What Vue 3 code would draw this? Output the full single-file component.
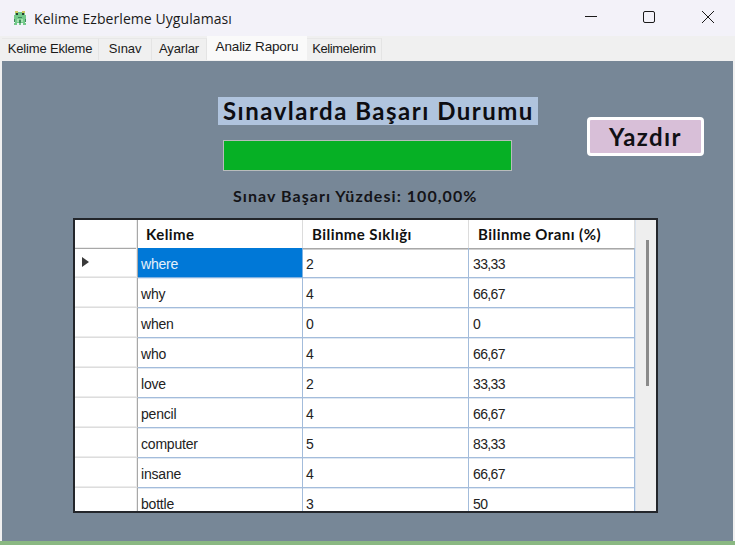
<script setup>
const tabs = [
  { name: 'Kelime Ekleme', w: 97 },
  { name: 'Sınav', w: 53 },
  { name: 'Ayarlar', w: 55 },
  { name: 'Analiz Raporu', w: 100, active: true },
  { name: 'Kelimelerim', w: 75 },
]
const rows = [
  ['where', '2', '33,33'],
  ['why', '4', '66,67'],
  ['when', '0', '0'],
  ['who', '4', '66,67'],
  ['love', '2', '33,33'],
  ['pencil', '4', '66,67'],
  ['computer', '5', '83,33'],
  ['insane', '4', '66,67'],
  ['bottle', '3', '50'],
]
</script>

<template>
  <div class="window">
    <header class="titlebar">
      <svg class="appicon" width="16" height="16" viewBox="0 0 16 16" shape-rendering="crispEdges">
        <path d="M3 1h3v1h4V1h3v4h1v5h-1v3h1v2h-3v-2H9v2H7v-2H5v2H2v-2h1v-3H2V5h1z" fill="#74c98a"/>
        <path d="M3 1h3v2H3zM10 1h3v2h-3z" fill="#cfc860"/>
        <path d="M4 3h2v2H4zM10 3h2v2h-2z" fill="#26402e"/>
        <path d="M6 7h4v1H6zM2 9h1v3H2zM13 9h1v3h-1zM7 10h2v3H7z" fill="#3d8a5a"/>
        <path d="M5 9h2v3H5zM9 9h2v3H9z" fill="#a6e2b0"/>
      </svg>
      <span class="apptitle">Kelime Ezberleme Uygulaması</span>
      <div class="winbtns">
        <svg width="12" height="12" viewBox="0 0 12 12"><path d="M0 5.5h12" stroke="#1a1a1a" stroke-width="1" fill="none"/></svg>
        <svg class="maxbtn" width="12" height="12" viewBox="0 0 12 12"><rect x="0.5" y="0.5" width="11" height="11" rx="1.5" stroke="#1a1a1a" stroke-width="1" fill="none"/></svg>
        <svg width="12" height="12" viewBox="0 0 12 12"><path d="M0 0l12 12M12 0L0 12" stroke="#1a1a1a" stroke-width="1" fill="none"/></svg>
      </div>
    </header>

    <nav class="tabs">
      <div
        v-for="t in tabs"
        :key="t.name"
        class="tab"
        :class="{ active: t.active }"
        :style="{ width: t.w + 'px' }"
      >{{ t.name }}</div>
    </nav>

    <main class="panel">
      <section class="top">
        <div class="summary">
          <h1 class="heading">Sınavlarda Başarı Durumu</h1>
          <div class="progress"></div>
          <p class="score">Sınav Başarı Yüzdesi: 100,00%</p>
        </div>
        <button class="print">Yazdır</button>
      </section>

      <section class="table">
        <div class="content">
          <div class="row head">
            <div class="rh"></div>
            <div class="c first">Kelime</div>
            <div class="c">Bilinme Sıklığı</div>
            <div class="c">Bilinme Oranı (%)</div>
          </div>
          <div v-for="(r, i) in rows" :key="r[0]" class="row">
            <div class="rh"><span v-if="i === 0" class="arrow"></span></div>
            <div class="c" :class="{ sel: i === 0 }">{{ r[0] }}</div>
            <div class="c num">{{ r[1] }}</div>
            <div class="c num last">{{ r[2] }}</div>
          </div>
        </div>
        <div class="scroll"><div class="thumb"></div></div>
      </section>
    </main>
    <div class="status"></div>
  </div>
</template>

<style>
html, body { margin: 0; overflow: hidden; }
</style>

<style scoped>
.window {
  width: 735px;
  height: 545px;
  display: flex;
  flex-direction: column;
  background: #f0f0f0;
  overflow: hidden;
  font-family: "Liberation Sans", sans-serif;
}
.titlebar {
  height: 36px;
  flex: none;
  background: #f3f2f9;
  display: flex;
  align-items: center;
  padding-left: 12px;
}
.appicon { margin-right: 6px; }
.apptitle {
  font-family: "Open Sans", sans-serif;
  font-size: 14px;
  letter-spacing: 0.07px;
  color: #1a1a1a;
}
.winbtns {
  margin-left: auto;
  margin-bottom: 2px;
  display: flex;
  gap: 46px;
  padding-right: 21px;
}
.maxbtn { margin-right: 1px; }
.tabs {
  height: 25px;
  flex: none;
  display: flex;
  align-items: flex-start;
  padding-left: 2px;
  box-sizing: border-box;
}
.tab {
  height: 22px;
  margin-top: 2px;
  box-sizing: border-box;
  font-size: 13px;
  letter-spacing: -0.15px;
  color: #1a1a1a;
  text-align: center;
  line-height: 20px;
  white-space: nowrap;
  background: #f0f0f0;
  border-right: 1px solid #e4e4e4;
  border-top: 1px solid #e8e8e8;
}
.tab:last-child { letter-spacing: -0.4px; }
.tab.active {
  background: #fafafa;
  height: 24px;
  margin-top: 0;
  font-size: 13.5px;
  line-height: 22px;
  border: none;
}
.panel {
  flex: 1;
  margin: 0 2px;
  background: #778797;
  min-height: 0;
  padding: 36px 0 0 71px;
  box-sizing: border-box;
}
.top {
  display: flex;
  height: 121px;
}
.summary {
  width: 320px;
  margin-left: 145px;
  display: flex;
  flex-direction: column;
  align-items: flex-start;
}
.heading {
  margin: 0;
  width: 320px;
  box-sizing: border-box;
  font-family: "Lato", sans-serif;
  font-size: 24px;
  line-height: 28px;
  font-weight: 700;
  letter-spacing: 1.5px;
  white-space: nowrap;
  color: #0d0d12;
  background: #b0c4de;
  padding: 0 5px;
}
.progress {
  width: 289px;
  height: 31px;
  margin: 15px 0 0 5px;
  flex: none;
  border: 1px solid #b8bcbc;
  box-sizing: border-box;
  background: #06b025;
}
.score {
  margin: 15px 0 0 15px;
  font-family: "Lato", sans-serif;
  font-size: 16px;
  line-height: 19px;
  font-weight: 700;
  letter-spacing: 1.05px;
  white-space: nowrap;
  color: #141418;
}
.print {
  width: 117px;
  height: 39px;
  margin: 20px 0 0 49px;
  background: #d8bfd8;
  border: 3px solid #fff;
  border-radius: 4px;
  font-family: "Lato", sans-serif;
  font-size: 24px;
  font-weight: 700;
  letter-spacing: 1.4px;
  color: #101014;
  padding: 0;
}
.table {
  width: 585px;
  height: 295px;
  box-sizing: border-box;
  border: 2px solid #23262b;
  display: flex;
  overflow: hidden;
  background: #fff;
}
.content { width: 560px; flex: none; overflow: hidden; }
.row {
  display: grid;
  grid-template-columns: 63px 165px 166px 166px;
  height: 30px;
  font-size: 14px;
  letter-spacing: -0.2px;
  color: #222;
}
.row.head {
  height: 28px;
  font-family: "Lato", sans-serif;
  font-weight: 700;
  font-size: 15px;
  letter-spacing: 0.45px;
  color: #111;
}
.rh {
  border-right: 1px solid #a8a8a8;
  border-bottom: 1px solid #dddddd;
  box-shadow: inset -1px -1px 0 #ececec;
  display: flex;
  align-items: center;
  padding: 0 0 1px 7px;
  box-sizing: border-box;
}
.c {
  border-right: 1px solid #a3bcdb;
  border-bottom: 1px solid #a3bcdb;
  box-shadow: 0 1px 0 #dfe8f3;
  padding: 3px 0 0 3px;
  box-sizing: border-box;
  line-height: 26px;
  white-space: nowrap;
}
.c.num { letter-spacing: -0.65px; }
.c.last { padding-left: 4px; }
.head .rh { border-bottom-color: #a8a8a8; }
.head .c {
  border-right-color: #dcdcdc;
  border-bottom: 1px solid #a8a8a8;
  box-shadow: 0 1px 0 #cfcfcf;
  padding: 0 0 0 9px;
  line-height: 28px;
}
.head .first { padding-left: 8px; }
.c.sel {
  background: #0078d7;
  color: #e4f0fb;
  border-right-color: #7fb2e2;
  border-bottom-color: #7fb2e2;
}
.arrow {
  display: block;
  width: 0;
  height: 0;
  border-left: 7px solid #3a3a3a;
  border-top: 5.5px solid transparent;
  border-bottom: 5.5px solid transparent;
}
.scroll {
  flex: 1;
  background: #eeeeee;
  border-left: 1px solid #d8e2ee;
  padding: 20px 0 0 10px;
  box-sizing: border-box;
}
.thumb { width: 3px; height: 146px; background: #8a8a8a; }
.status { height: 4px; flex: none; background: #8ab882; }
</style>
